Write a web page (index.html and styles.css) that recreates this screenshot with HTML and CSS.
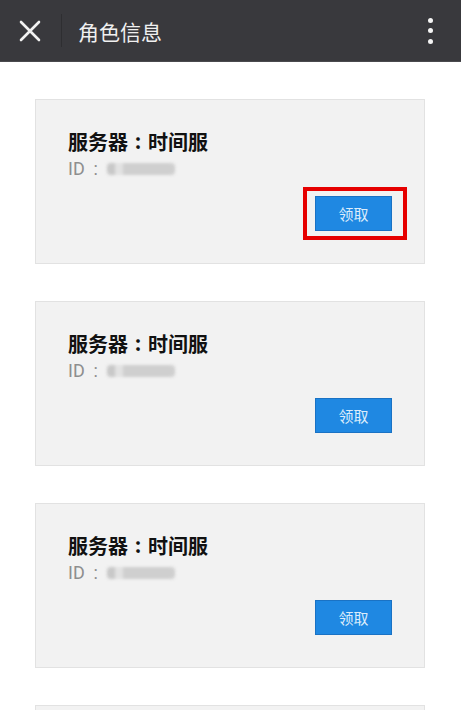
FILE: index.html
```html
<!DOCTYPE html>
<html lang="zh-CN">
  <head>
    <meta charset="UTF-8" />
    <meta name="viewport" content="width=device-width, initial-scale=1.0" />
    <title>角色信息</title>
    <link rel="stylesheet" href="styles.css">
  </head>
  <body>
    <div class="topbar">
      <span class="close">
        <svg width="22" height="22" viewBox="0 0 22 22">
          <path d="M2 2 L20 20 M20 2 L2 20" stroke="#f2f2f2" stroke-width="2.6" stroke-linecap="round" />
        </svg>
      </span>
      <span class="divider"></span>
      <h1 class="title">角色信息</h1>
      <span class="more">
        <i></i><i></i><i></i>
      </span>
    </div>

    <div class="list">
      <!-- 角色卡片 -->
      <div class="card">
        <h2>服务器<span class="colon">:</span>时间服</h2>
        <p class="role-id">ID<span class="colon">:</span><span class="blur"></span></p>
        <div class="actions">
          <button class="btn">领取<span class="mark"></span></button>
        </div>
      </div>
      <div class="card">
        <h2>服务器<span class="colon">:</span>时间服</h2>
        <p class="role-id">ID<span class="colon">:</span><span class="blur"></span></p>
        <div class="actions">
          <button class="btn">领取</button>
        </div>
      </div>
      <div class="card">
        <h2>服务器<span class="colon">:</span>时间服</h2>
        <p class="role-id">ID<span class="colon">:</span><span class="blur"></span></p>
        <div class="actions">
          <button class="btn">领取</button>
        </div>
      </div>
      <!-- 下一张卡片，只露出顶部 -->
      <div class="card card-peek"></div>
    </div>
  </body>
</html>
```

FILE: styles.css
```css
body {
  margin: 0;
  background: #fff;
  font-family: "Noto Sans CJK SC", Roboto, sans-serif;
  overflow: hidden;
}

/* 顶部栏 */
.topbar {
  height: 62px;
  background: #39393d;
  border-bottom: 1px solid #4a4a4e;
  box-sizing: border-box;
  display: flex;
  align-items: center;
  padding: 0 20px 0 19px;
}

.close {
  width: 22px;
  height: 22px;
  display: flex;
}

.divider {
  width: 1px;
  height: 33px;
  background: #2e2e31;
  margin: 0 16px 0 20px;
}

.title {
  flex: 1;
  margin: 0;
  color: #f0f0f0;
  font-size: 21px;
  font-weight: normal;
  line-height: 30px;
}

.more {
  display: flex;
  flex-direction: column;
  gap: 5.5px;
  padding-right: 8px;
}

.more i {
  width: 5px;
  height: 5px;
  border-radius: 50%;
  background: #f4f4f4;
}

/* 列表 */
.list {
  padding: 37px 36px 0 35px;
  display: flex;
  flex-direction: column;
  gap: 37px;
}

.card {
  background: #f2f2f2;
  border: 1px solid #e2e2e2;
  padding: 29px 32px 32px;
}

.card-peek {
  height: 100px;
}

.card h2 {
  margin: 0;
  font-size: 20px;
  line-height: 26px;
  color: #111;
  font-weight: bold;
  display: flex;
  align-items: center;
}

.card h2 .colon {
  width: 20px;
  text-align: center;
  position: relative;
  top: -1px;
}

.role-id {
  margin: 2px 0 0;
  font-family: Roboto, "Noto Sans CJK SC", sans-serif;
  font-size: 18px;
  line-height: 24px;
  color: #8e8e8e;
  display: flex;
  align-items: center;
}

.role-id .colon {
  width: 22px;
  text-align: center;
}

.blur {
  display: inline-block;
  width: 68px;
  height: 12px;
  background: linear-gradient(90deg, #c8c8c8 0 8px, #e2e2e2 8px 16px, #cfcfcf 16px 100%);
  filter: blur(1.5px);
  border-radius: 4px;
}

.actions {
  display: flex;
  justify-content: flex-end;
  margin-top: 15px;
}

.btn {
  position: relative;
  width: 77px;
  height: 35px;
  background: #1f88e2;
  border: 1px solid #1a72c4;
  color: #dcecfb;
  font-family: inherit;
  font-size: 15px;
  padding: 0;
}

/* 红框标注 */
.mark {
  position: absolute;
  left: -13px;
  top: -10px;
  width: 104px;
  height: 53px;
  border: 4px solid #e60000;
  box-sizing: border-box;
}
```
